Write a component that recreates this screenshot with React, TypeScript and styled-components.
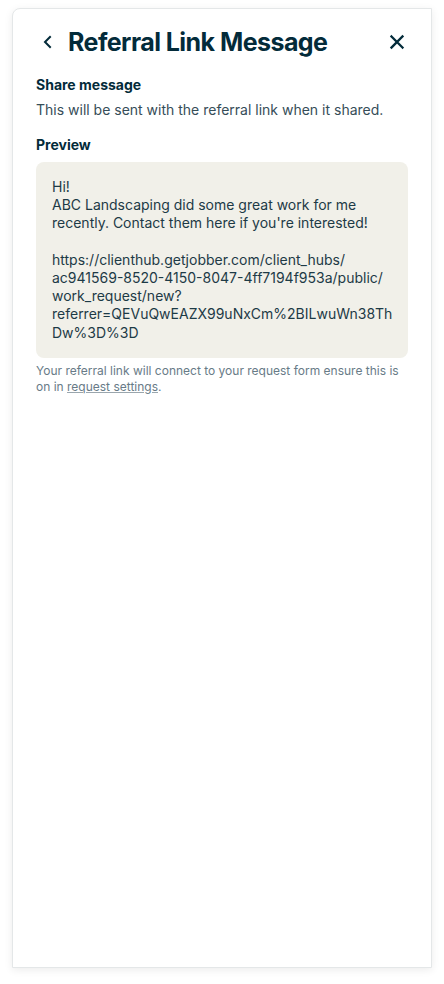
import React from 'react';
import styled, { createGlobalStyle } from 'styled-components';

const GlobalStyle = createGlobalStyle`
  html, body {
    margin: 0;
    padding: 0;
    background: #ffffff;
  }
  body {
    font-family: Inter, "Noto Sans", "Liberation Sans", sans-serif;
    color: #032b3a;
  }
`;

const Page = styled.div`
  padding: 8px 12px 16px 12px;
`;

const Sheet = styled.div`
  width: 420px;
  height: 960px;
  box-sizing: border-box;
  background: #ffffff;
  border: 1px solid #e4e7e8;
  border-radius: 8px 0 0 0;
  box-shadow: 0 2px 8px rgba(0, 0, 0, 0.08);
  display: flex;
  flex-direction: column;
`;

const Header = styled.div`
  display: flex;
  align-items: center;
  height: 36px;
  padding: 15px 22px 0 23px;
`;

const IconButton = styled.button`
  display: flex;
  align-items: center;
  justify-content: center;
  width: 24px;
  height: 24px;
  padding: 0;
  border: none;
  background: transparent;
  color: #032b3a;
  cursor: pointer;
`;

const Title = styled.h1`
  flex: 1;
  margin: 0 0 0 8px;
  font-size: 25px;
  font-weight: 700;
  letter-spacing: -0.55px;
  line-height: 36px;
  color: #032b3a;
`;

const Body = styled.div`
  padding: 16px 23px 0 23px;
  display: flex;
  flex-direction: column;
`;

const Label = styled.h3<{ $gap?: number }>`
  margin: ${(p) => p.$gap ?? 0}px 0 0 0;
  font-size: 14px;
  font-weight: 700;
  line-height: 18px;
  color: #032b3a;
`;

const Description = styled.p`
  margin: 7px 0 0 0;
  font-size: 14px;
  line-height: 18px;
  color: #364d58;
`;

const PreviewBox = styled.div`
  margin-top: 8px;
  padding: 16px 8px 16px 16px;
  border-radius: 8px;
  background: #f1f0e9;
  font-size: 14px;
  line-height: 18.2px;
  color: #1d3a46;
  white-space: pre-line;
  overflow-wrap: break-word;
`;

const Note = styled.p`
  margin: 5px 0 0 0;
  font-size: 12px;
  line-height: 16px;
  color: #687b87;
`;

const NoteLink = styled.a`
  color: #687b87;
  text-decoration: underline;
  text-decoration-color: #9aa6ad;
  text-underline-offset: 1px;
`;

const ChevronLeft = () => (
  <svg width="24" height="24" viewBox="0 0 24 24" fill="none" stroke="currentColor" strokeWidth="2" strokeLinecap="square" strokeLinejoin="miter">
    <path d="M14 17 9 12l5-5" />
  </svg>
);

const CloseIcon = () => (
  <svg width="24" height="24" viewBox="0 0 24 24" fill="none" stroke="currentColor" strokeWidth="2.3" strokeLinecap="square">
    <path d="M6.5 6.5l11 11M17.5 6.5l-11 11" />
  </svg>
);

const message = `Hi!
ABC Landscaping did some great work for me recently. Contact them here if you're interested!

https://clienthub.getjobber.com/client_hubs/
ac941569-8520-4150-8047-4ff7194f953a/public/
work_request/new?
referrer=QEVuQwEAZX99uNxCm%2BILwuWn38Th
Dw%3D%3D`;

export default function App() {
  return (
    <>
      <GlobalStyle />
      <Page>
        <Sheet>
          <Header>
            <IconButton aria-label="Back">
              <ChevronLeft />
            </IconButton>
            <Title>Referral Link Message</Title>
            <IconButton aria-label="Close">
              <CloseIcon />
            </IconButton>
          </Header>
          <Body>
            <Label>Share message</Label>
            <Description>This will be sent with the referral link when it shared.</Description>
            <Label $gap={17}>Preview</Label>
            <PreviewBox>{message}</PreviewBox>
            <Note>
              Your referral link will connect to your request form ensure this is on in{' '}
              <NoteLink href="#">request settings</NoteLink>.
            </Note>
          </Body>
        </Sheet>
      </Page>
    </>
  );
}
